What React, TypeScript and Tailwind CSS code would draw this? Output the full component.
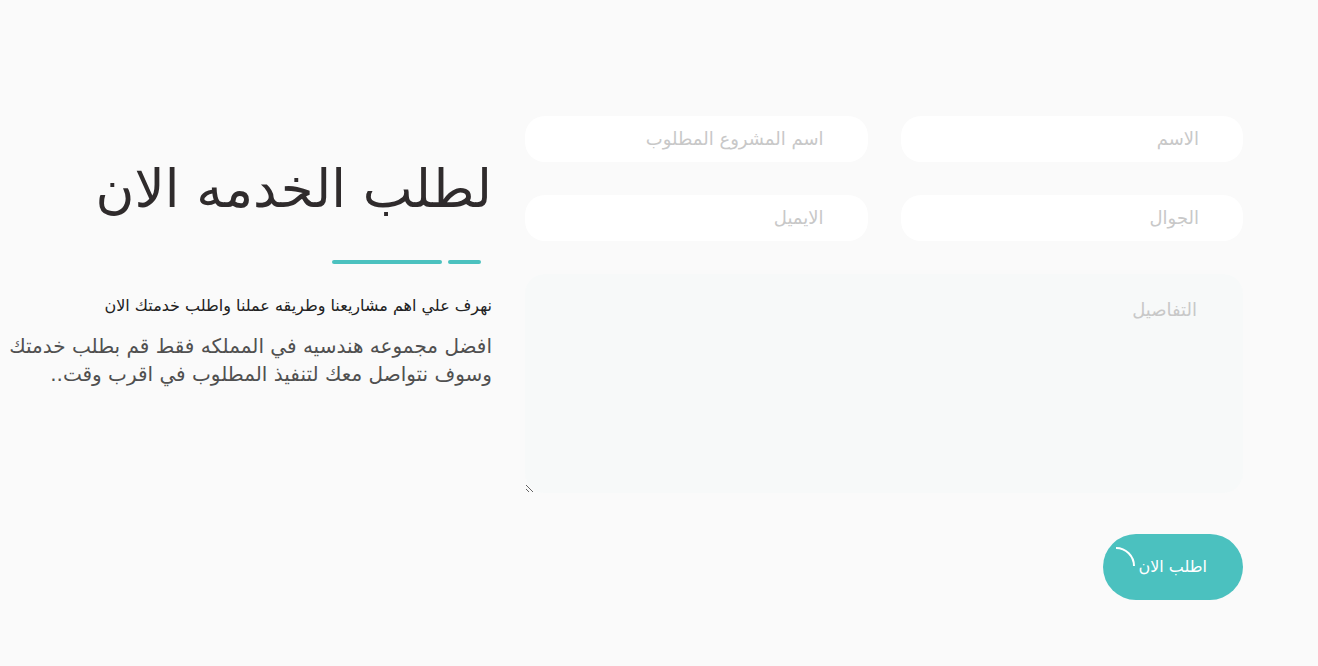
const fieldClass =
  "block h-[46px] w-full min-w-0 rounded-[20px] bg-white pe-4 ps-11 pb-[2px] text-lg text-[#666] outline-none placeholder:overflow-visible placeholder:text-[#c8c8c8] placeholder:opacity-100";

const fields = [
  { id: "name", label: "الاسم", type: "text" },
  { id: "project", label: "اسم المشروع المطلوب", type: "text" },
  { id: "phone", label: "الجوال", type: "tel" },
  { id: "email", label: "الايميل", type: "email" },
];

function RequestForm() {
  return (
    <form className="grid grid-cols-2 gap-[33px]" onSubmit={(e) => e.preventDefault()}>
      {fields.map((f) => (
        <input
          key={f.id}
          name={f.id}
          type={f.type}
          dir="rtl"
          aria-label={f.label}
          placeholder={f.label}
          className={fieldClass}
        />
      ))}
      <textarea
        name="details"
        aria-label="التفاصيل"
        placeholder="التفاصيل"
        className="col-span-2 block h-[219px] w-full resize rounded-[20px] bg-[#f7f9f9] pe-4 ps-[46px] pt-[22px] text-lg text-[#666] outline-none placeholder:text-[#c8c8c8] placeholder:opacity-100"
      />
      <button
        type="submit"
        className="mt-2 flex h-[66px] w-[140px] items-center rounded-[33px] bg-[#4bc1bf] ps-9 text-base whitespace-nowrap text-white"
      >
        اطلب الان
        <svg viewBox="0 0 20 20" className="mb-5 ms-[3px] size-5 shrink-0" fill="none" stroke="currentColor" strokeWidth="2" aria-hidden="true">
          <path d="M1 1A18 18 0 0 1 19 19" />
        </svg>
      </button>
    </form>
  );
}

function Intro() {
  return (
    <section className="pt-[40px] whitespace-nowrap">
      <h2 className="text-[53px] leading-[66px] text-[#2f2b2c]">لطلب الخدمه الان</h2>
      <div className="ms-[11px] mt-[38px] flex gap-[6px]">
        <span className="h-1 w-[33px] rounded-full bg-[#4bc1bf]" />
        <span className="h-1 w-[110px] rounded-full bg-[#4bc1bf]" />
      </div>
      <h3 className="mt-[30px] text-base leading-6 text-[#222]">نهرف علي اهم مشاريعنا وطريقه عملنا واطلب خدمتك الان</h3>
      <p className="mt-[14px] text-xl leading-7 text-[#505050]">
        افضل مجموعه هندسيه في المملكه فقط قم بطلب خدمتك
        <br />
        وسوف نتواصل معك لتنفيذ المطلوب في اقرب وقت..
      </p>
    </section>
  );
}

export default function App() {
  return (
    <main
      dir="rtl"
      className="grid min-h-screen grid-cols-[718fr_492fr] content-start gap-x-[33px] overflow-x-hidden bg-[#fafafa] ps-[75px] pt-[116px] pb-16 font-['DejaVu_Sans',sans-serif]"
    >
      <RequestForm />
      <Intro />
    </main>
  );
}
